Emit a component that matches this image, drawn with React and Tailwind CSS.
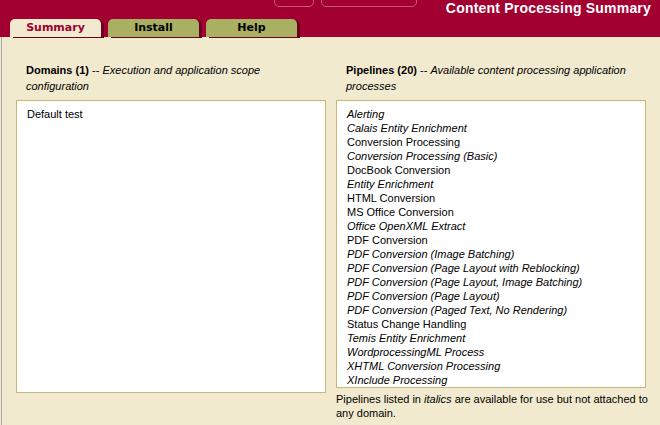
import React from "react";

const pipelines = [
  { name: "Alerting", italic: true },
  { name: "Calais Entity Enrichment", italic: true },
  { name: "Conversion Processing", italic: false },
  { name: "Conversion Processing (Basic)", italic: true },
  { name: "DocBook Conversion", italic: false },
  { name: "Entity Enrichment", italic: true },
  { name: "HTML Conversion", italic: false },
  { name: "MS Office Conversion", italic: false },
  { name: "Office OpenXML Extract", italic: true },
  { name: "PDF Conversion", italic: false },
  { name: "PDF Conversion (Image Batching)", italic: true },
  { name: "PDF Conversion (Page Layout with Reblocking)", italic: true },
  { name: "PDF Conversion (Page Layout, Image Batching)", italic: true },
  { name: "PDF Conversion (Page Layout)", italic: true },
  { name: "PDF Conversion (Paged Text, No Rendering)", italic: true },
  { name: "Status Change Handling", italic: false },
  { name: "Temis Entity Enrichment", italic: true },
  { name: "WordprocessingML Process", italic: true },
  { name: "XHTML Conversion Processing", italic: true },
  { name: "XInclude Processing", italic: true },
];

const Tab = ({ label, active }) => (
  <div
    className={
      "w-[91px] h-[18px] rounded-t-[5px] flex items-center justify-center text-[11px] font-bold font-['DejaVu_Sans',sans-serif] shadow-[3px_1px_0_#6c0022] " +
      (active ? "bg-[#f2eacf] text-[#9c0030]" : "bg-[#a9b062] text-black")
    }
  >
    {label}
  </div>
);

const App = () => {
  return (
    <div className="w-[660px] h-[425px] overflow-hidden bg-[#f2eacf] font-['Liberation_Sans',Arial,sans-serif] text-[11px] text-black">
      <div className="relative h-[37px] bg-[#a30032] flex justify-between">
        <div className="absolute left-[274px] -top-[4px] w-[40px] h-[11px] rounded-[5px] border border-[#c9577a]" />
        <div className="absolute left-[321px] -top-[4px] w-[96px] h-[11px] rounded-[5px] border border-[#c9577a]" />
        <div className="flex items-end gap-[7px] pl-[10px]">
          <Tab label="Summary" active />
          <Tab label="Install" />
          <Tab label="Help" />
        </div>
        <h1 className="pr-[9px] text-[14px] leading-[16px] font-bold tracking-[0.2px] text-white">
          Content Processing Summary
        </h1>
      </div>

      <div className="h-[388px] ml-px border-l border-[#a8a8a8] flex gap-[10px] pl-[14px]">
        <section className="w-[310px] pt-[25px]">
          <p className="pl-[10px] leading-[16px] mb-[6px]">
            <b>Domains (1)</b> -- <i>Execution and application scope configuration</i>
          </p>
          <div className="h-[293px] bg-white border border-[#c9b77c] px-[10px] pt-[6px] leading-[14px]">
            Default test
          </div>
        </section>

        <section className="w-[310px] pt-[25px]">
          <p className="pl-[10px] leading-[16px] mb-[6px]">
            <b>Pipelines (20)</b> -- <i>Available content processing application processes</i>
          </p>
          <ul className="h-[288px] bg-white border border-[#c9b77c] px-[10px] pt-[6px] leading-[14px]">
            {pipelines.map((p) => (
              <li key={p.name} className={p.italic ? "italic" : ""}>
                {p.name}
              </li>
            ))}
          </ul>
          <p className="w-[318px] mt-[4px] leading-[14px]">
            Pipelines listed in <i>italics</i> are available for use but not attached to any domain.
          </p>
        </section>
      </div>
    </div>
  );
};

export default App;
